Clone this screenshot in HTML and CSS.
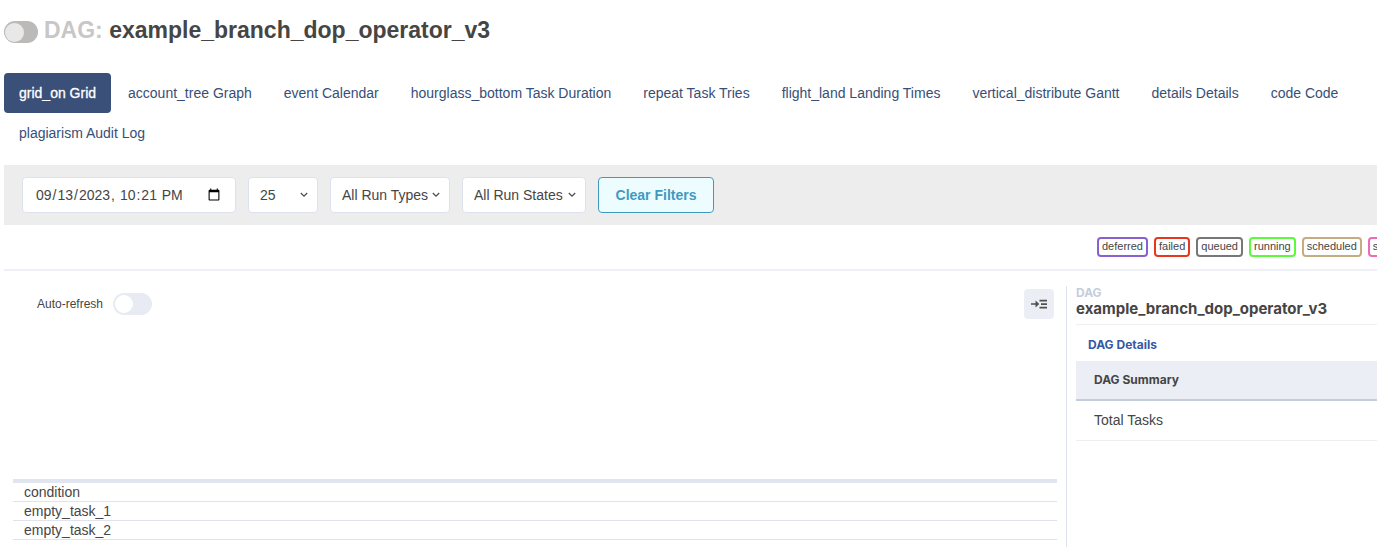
FILE: index.html
```html
<!DOCTYPE html>
<html lang="en">
<head>
<meta charset="utf-8">
<title>example_branch_dop_operator_v3 - Grid</title>
<link rel="stylesheet" href="styles.css">
</head>
<body>
<header class="dag-header">
  <input class="pause-toggle" type="checkbox" aria-label="Pause or unpause DAG">
  <h1 class="dag-title"><span class="dag-prefix">DAG:</span> example_branch_dop_operator_v3</h1>
</header>
<nav class="tabs">
  <a class="tab tab-active" href="#grid">grid_on Grid</a>
  <a class="tab" href="#graph">account_tree Graph</a>
  <a class="tab" href="#calendar">event Calendar</a>
  <a class="tab" href="#duration">hourglass_bottom Task Duration</a>
  <a class="tab" href="#tries">repeat Task Tries</a>
  <a class="tab" href="#landing">flight_land Landing Times</a>
  <a class="tab" href="#gantt">vertical_distribute Gantt</a>
  <a class="tab" href="#details">details Details</a>
  <a class="tab" href="#code">code Code</a>
  <a class="tab" href="#audit">plagiarism Audit Log</a>
</nav>
<form class="filters">
  <input class="field field-date" type="datetime-local" value="2023-09-13T22:21" aria-label="Base date">
  <select class="field field-count" aria-label="Number of runs"><option>25</option></select>
  <select class="field field-types" aria-label="Run types"><option>All Run Types</option></select>
  <select class="field field-states" aria-label="Run states"><option>All Run States</option></select>
  <button class="clear-button" type="button">Clear Filters</button>
</form>
<div class="legend">
  <div class="legend-items">
    <span class="badge deferred">deferred</span>
    <span class="badge failed">failed</span>
    <span class="badge queued">queued</span>
    <span class="badge running">running</span>
    <span class="badge scheduled">scheduled</span>
    <span class="badge skipped">skipped</span>
  </div>
</div>
<main class="main">
  <section class="grid-panel">
    <div class="grid-toolbar">
      <label class="refresh-label" for="refresh">Auto-refresh</label>
      <input class="refresh-toggle" id="refresh" type="checkbox">
      <button class="panel-button" type="button" aria-label="Hide details panel">
        <svg class="panel-icon" viewBox="0 0 16 12" width="16" height="12" aria-hidden="true">
          <path d="M0 5.200h4.500V2.500L8.300 6 4.500 9.500V6.800H0zM8.500 1.700H16v1.700H8.500zM10 5.200h6v1.700h-6zM8.500 8.700H16v1.700H8.500z" fill="#51504f"/>
        </svg>
      </button>
    </div>
    <table class="tasks">
      <tbody>
        <tr><td>condition</td></tr>
        <tr><td>empty_task_1</td></tr>
        <tr><td>empty_task_2</td></tr>
      </tbody>
    </table>
  </section>
  <aside class="details">
    <div class="details-heading">
      <div class="details-kind">DAG</div>
      <h2 class="details-name">example_branch_dop_operator_v3</h2>
    </div>
    <a class="details-link" href="#dag-details">DAG Details</a>
    <table class="summary">
      <thead><tr><th>DAG Summary</th></tr></thead>
      <tbody><tr><td>Total Tasks</td></tr></tbody>
    </table>
  </aside>
</main>
</body>
</html>
```
FILE: styles.css
```css
* {
  box-sizing: border-box;
}

body {
  display: flex;
  flex-direction: column;
  height: 100vh;
  margin: 0;
  padding-left: 4px;
  overflow: hidden;
  background: #fff;
  color: #464544;
  font: 14px/20px "Liberation Sans", Arial, sans-serif;
}

.dag-header {
  display: flex;
  align-items: center;
  gap: 6px;
  padding: 14px 0 27px;
}

.pause-toggle,
.refresh-toggle {
  display: flex;
  align-items: center;
  flex: none;
  appearance: none;
  margin: 0;
  height: 22px;
  border-radius: 11px;
}

.pause-toggle {
  width: 34px;
  margin-top: 4px;
  padding: 1px;
  background: #bbbab9;
}

.pause-toggle::before {
  width: 19px;
  height: 19px;
  border-radius: 50%;
  background: #e8e8e8;
  content: "";
}

.dag-title {
  margin: 0;
  font-size: 23px;
  line-height: 32px;
  font-weight: 700;
  white-space: nowrap;
}

.dag-prefix {
  color: #c8c7c7;
}

.tabs {
  display: flex;
  flex-wrap: wrap;
  margin-left: -2px;
}

.tab {
  margin-left: 2px;
  padding: 10px 15px;
  border-radius: 4px;
  color: #374f77;
  text-decoration: none;
  white-space: nowrap;
}

.tab-active {
  background: #3a5078;
  color: #fff;
  -webkit-text-stroke: 0.3px #fff;
}

.filters {
  display: flex;
  gap: 12px;
  margin-top: 12px;
  padding: 12px 18px;
  background: #ededed;
}

.field {
  height: 36px;
  padding: 0 12px;
  border: 1px solid #dde2ee;
  border-radius: 4px;
  background-color: #fff;
  color: #464544;
  font: inherit;
}

select.field {
  appearance: none;
  padding: 0 0 0 11px;
  background-image: url("data:image/svg+xml,%3Csvg xmlns='http://www.w3.org/2000/svg' width='8' height='6' viewBox='0 0 8 6'%3E%3Cpath d='M.8 1 4 4.200 7.200 1' fill='none' stroke='%2351504f' stroke-width='1.300'/%3E%3C/svg%3E");
  background-position: right 9px center;
  background-repeat: no-repeat;
}

.field-date {
  width: 214px;
}

.field-count {
  width: 70px;
}

.field-types {
  width: 120px;
}

.field-states {
  width: 124px;
}

.clear-button {
  width: 116px;
  height: 36px;
  padding: 0;
  border: 1px solid #4299bf;
  border-radius: 4px;
  background: #edfdff;
  color: #4299bf;
  font: inherit;
  font-weight: 700;
}

.legend {
  display: flex;
  justify-content: flex-end;
  padding: 12px 0;
  border-bottom: 2px solid #edf0f6;
}

.legend-items {
  display: flex;
  flex: 0 0 280px;
  gap: 6px;
  overflow: hidden;
}

.badge {
  flex: none;
  height: 20px;
  padding: 0 3px;
  border: 2px solid;
  border-radius: 4px;
  font-size: 11px;
  line-height: 15px;
}

.deferred {
  border-color: #8860d0;
}

.failed {
  border-color: #e8371f;
}

.queued {
  border-color: #777;
}

.running {
  border-color: #5cf93c;
}

.scheduled {
  border-color: #c5ad80;
}

.skipped {
  border-color: #ec6bb4;
}

.main {
  display: flex;
  flex: 1;
  padding-top: 15px;
}

.grid-panel {
  flex: 1;
  padding: 3px 9px 0;
}

.grid-toolbar {
  display: flex;
  align-items: center;
  gap: 10px;
  padding: 0 3px 0 24px;
}

.refresh-label {
  font-size: 12px;
}

.refresh-toggle {
  width: 39px;
  padding: 2px;
  background: #e8ebf3;
}

.refresh-toggle::before {
  width: 18px;
  height: 18px;
  border-radius: 50%;
  background: #fff;
  content: "";
}

.panel-button {
  display: flex;
  align-items: center;
  justify-content: center;
  width: 30px;
  height: 30px;
  margin-left: auto;
  padding: 0;
  border: 0;
  border-radius: 4px;
  background: #ebeef5;
}

.tasks {
  width: 100%;
  margin-top: 160px;
  border-spacing: 0;
  border-top: 4px solid #e0e5f0;
}

.tasks td {
  padding: 0 11px;
  border-bottom: 1px solid #e0e3ee;
  line-height: 18px;
}

.details {
  flex: 0 0 311px;
  padding-left: 9px;
  border-left: 1px solid #dde2ec;
}

.details-heading {
  padding-bottom: 7px;
  border-bottom: 1px solid #edeff3;
}

.details-kind {
  color: #c5cddc;
  font: 700 12px/14px Inter, sans-serif;
}

.details-name {
  margin: 0;
  font: 700 15px/17px Inter, sans-serif;
}

.details-link {
  display: block;
  padding: 12px 12px 8px;
  color: #3559a5;
  font: 700 12px/16px Inter, sans-serif;
  text-decoration: none;
}

.summary {
  width: 100%;
  border-spacing: 0;
}

.summary th,
.summary td {
  padding: 9px 18px;
  text-align: left;
}

.summary th {
  border-bottom: 2px solid #c5cddd;
  background: #ebeef5;
  font: 700 12px/20px Inter, sans-serif;
}

.summary td {
  padding-bottom: 10px;
  border-bottom: 1px solid #edeff3;
}
```
